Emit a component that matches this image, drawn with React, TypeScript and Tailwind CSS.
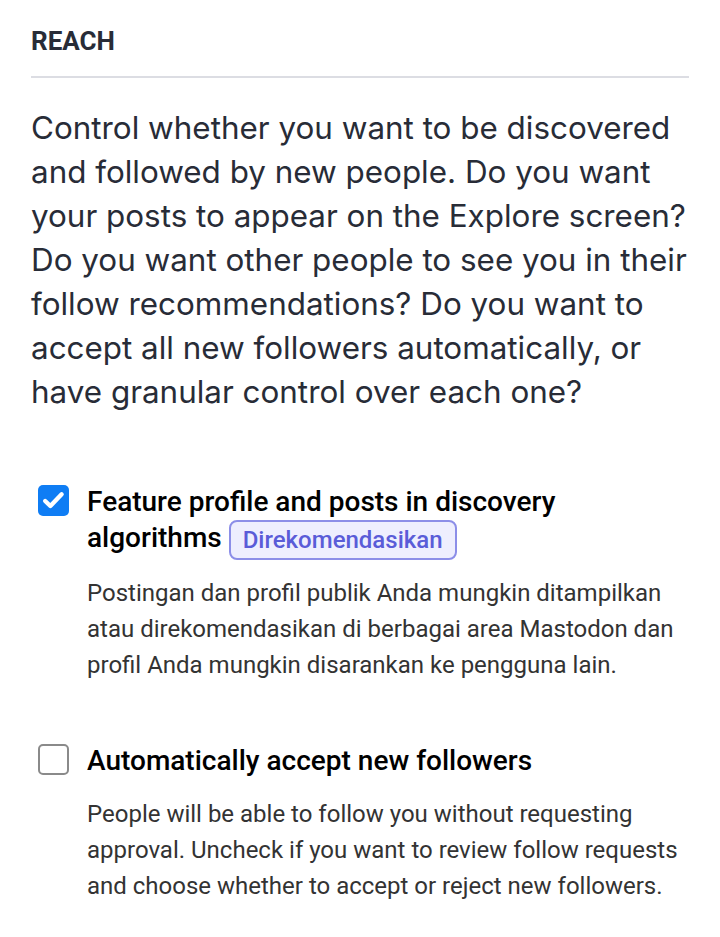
import { useState } from "react"

const font = { fontFamily: "Roboto, 'Liberation Sans', sans-serif" }
const leadFont = { fontFamily: "Inter, Roboto, sans-serif" }

function Checkbox({ checked, onChange }: { checked: boolean; onChange: () => void }) {
    return (
        <button
            type="button"
            onClick={onChange}
            className={`mt-[1px] flex h-[31px] w-[31px] shrink-0 items-center justify-center rounded-[5px] ${
                checked ? "bg-[#0f7df4]" : "border-2 border-[#8a8a8a] bg-white"
            }`}
        >
            {checked && (
                <svg width="25" height="25" viewBox="0 0 24 24" fill="none">
                    <path d="M4 12.5l5 4.8L19.8 6" stroke="white" strokeWidth="4.2" strokeLinecap="round" strokeLinejoin="round" />
                </svg>
            )}
        </button>
    )
}

export default function App() {
    const [discoverable, setDiscoverable] = useState(true)
    const [autoAccept, setAutoAccept] = useState(false)

    return (
        <div className="min-h-[937px] bg-white px-[31px] pt-[26px]" style={font}>
            <h3 className="text-[26px] font-bold leading-[30px] text-[#282c37]">REACH</h3>
            <div className="mt-[20px] h-[2px] bg-[#dcdde3]" />

            <p className="mt-[28px] text-[31.4px] leading-[44px] text-[#282c37]" style={leadFont}>
                Control whether you want to be discovered and followed by new people. Do you want your posts to appear
                on the Explore screen? Do you want other people to see you in their follow recommendations? Do you want
                to accept all new followers automatically, or have granular control over each one?
            </p>

            {/* discoverable */}
            <div className="mt-[70px] flex gap-[18px] pl-[7px]">
                <Checkbox checked={discoverable} onChange={() => setDiscoverable((v) => !v)} />
                <div>
                    <div className="text-[28px] font-medium leading-[36px] text-black">
                        Feature profile and posts in discovery algorithms{" "}
                        <span className="-my-[2px] inline-block rounded-[8px] border-2 border-[#8c8ee8] bg-[#eeeefe] px-[12px] align-middle text-[24px] font-medium leading-[36px] text-[#5a5cd8]">
                            Direkomendasikan
                        </span>
                    </div>
                    <p className="mt-[17px] text-[24px] leading-[36px] text-[#333]">
                        Postingan dan profil publik Anda mungkin ditampilkan atau direkomendasikan di berbagai area
                        Mastodon dan profil Anda mungkin disarankan ke pengguna lain.
                    </p>
                </div>
            </div>

            {/* auto accept */}
            <div className="mt-[60px] flex gap-[18px] pl-[7px]">
                <Checkbox checked={autoAccept} onChange={() => setAutoAccept((v) => !v)} />
                <div>
                    <div className="text-[28px] font-medium leading-[36px] text-black">
                        Automatically accept new followers
                    </div>
                    <p className="mt-[17px] text-[24px] leading-[36px] text-[#333]">
                        People will be able to follow you without requesting approval. Uncheck if you want to review
                        follow requests and choose whether to accept or reject new followers.
                    </p>
                </div>
            </div>
        </div>
    )
}
